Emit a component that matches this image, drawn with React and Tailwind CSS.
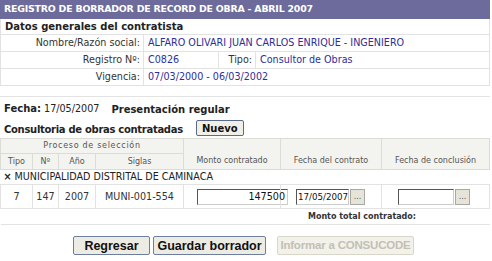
import React from "react"

const font = { fontFamily: "'DejaVu Sans', Verdana, sans-serif" }

function DotsButton() {
  return (
    <span className="inline-flex h-[16px] w-[15px] shrink-0 items-center justify-center border border-[#a8a8a0] bg-[#e6e4d8] text-[8px] leading-none text-[#555]">
      ...
    </span>
  )
}

export default function App() {
  return (
    <div className="h-[261px] w-[492px] overflow-hidden bg-white text-[9.6px] text-[#333]" style={font}>
      {/* Title */}
      <div className="mr-[2px] flex h-[19px] items-center bg-[#6c6b9b] pl-[4px] text-[9.4px] font-bold tracking-[-0.2px] text-white">
        REGISTRO DE BORRADOR DE RECORD DE OBRA - ABRIL 2007
      </div>

      {/* Datos generales */}
      <div className="mr-[2px] border-l border-r border-[#e2e2e2]">
        <div className="flex h-[16px] items-center border-b border-[#e2e2e2] pl-[4px] text-[10px] font-bold text-[#222]">
          Datos generales del contratista
        </div>
        <div className="flex h-[17px] items-center border-b border-[#e2e2e2]">
          <div className="w-[143px] border-r border-[#e2e2e2] pr-[3px] text-right leading-[16px]">Nombre/Razón social:</div>
          <div className="pl-[4px] text-[#2e2e9a]">ALFARO OLIVARI JUAN CARLOS ENRIQUE - INGENIERO</div>
        </div>
        <div className="flex h-[17px] items-center border-b border-[#e2e2e2]">
          <div className="w-[143px] border-r border-[#e2e2e2] pr-[3px] text-right leading-[16px]">Registro Nº:</div>
          <div className="w-[75px] border-r border-[#e2e2e2] pl-[4px] leading-[16px] text-[#2e2e9a]">C0826</div>
          <div className="w-[37px] border-r border-[#e2e2e2] pr-[3px] text-right leading-[16px]">Tipo:</div>
          <div className="pl-[4px] text-[#2e2e9a]">Consultor de Obras</div>
        </div>
        <div className="flex h-[17px] items-center border-b border-[#e2e2e2]">
          <div className="w-[143px] border-r border-[#e2e2e2] pr-[3px] text-right leading-[16px]">Vigencia:</div>
          <div className="pl-[4px] text-[#2e2e9a]">07/03/2000 - 06/03/2002</div>
        </div>
      </div>

      {/* Consultoria */}
      <div className="mr-[2px] mt-[10px] border-t border-[#e2e2e2]">
        <div className="flex h-[21px] items-center gap-[12px] pl-[4px] pt-[3px] text-[9.6px] text-[#222]">
          <span>
            <b className="text-[10px]">Fecha:</b> 17/05/2007
          </span>
          <b className="text-[10px]">Presentación regular</b>
        </div>
        <div className="flex h-[20px] items-center pl-[4px] text-[10px] font-bold text-[#222]">
          <span className="mt-[3px] tracking-[-0.3px]">Consultoria de obras contratadas</span>
          <span className="ml-[13px] inline-flex h-[16px] w-[48px] items-center justify-center rounded-[2px] border border-[#5a6b8a] bg-[#f0efe8] text-[10px] font-bold text-[#111]">
            Nuevo
          </span>
        </div>

        <table className="w-full table-fixed border-collapse text-[9.6px]">
          <colgroup>
            <col className="w-[32px]" />
            <col className="w-[26px]" />
            <col className="w-[37px]" />
            <col className="w-[88px]" />
            <col className="w-[97px]" />
            <col className="w-[101px]" />
            <col />
          </colgroup>
          <thead className="bg-[#f3f3ef] text-[8px] text-[#555]">
            <tr className="h-[15px]">
              <th colSpan={4} className="border border-[#dcdcd6] font-normal tracking-[0.7px]">Proceso de selección</th>
              <th rowSpan={2} className="border border-[#dcdcd6] pt-[14px] font-normal">Monto contratado</th>
              <th rowSpan={2} className="border border-[#dcdcd6] pt-[14px] font-normal">Fecha del contrato</th>
              <th rowSpan={2} className="border border-[#dcdcd6] pt-[14px] font-normal">Fecha de conclusión</th>
            </tr>
            <tr className="h-[16px]">
              <th className="border border-[#dcdcd6] font-normal">Tipo</th>
              <th className="border border-[#dcdcd6] font-normal">Nº</th>
              <th className="border border-[#dcdcd6] font-normal">Año</th>
              <th className="border border-[#dcdcd6] font-normal">Siglas</th>
            </tr>
          </thead>
          <tbody>
            <tr className="h-[15px]">
              <td colSpan={7} className="pl-[3px] text-[9.6px] text-[#222]">
                <span className="mr-[3px] font-bold">×</span>MUNICIPALIDAD DISTRITAL DE CAMINACA
              </td>
            </tr>
            <tr className="h-[24px] text-center">
              <td className="border border-[#e2e2e2]">7</td>
              <td className="border border-[#e2e2e2]">147</td>
              <td className="border border-[#e2e2e2]">2007</td>
              <td className="border border-[#e2e2e2]">MUNI-001-554</td>
              <td className="border border-[#e2e2e2]">
                <div className="ml-[13px] h-[16px] w-[91px] border border-t-[#555] border-l-[#555] border-r-[#ccc] border-b-[#ccc] bg-white pr-[2px] text-right leading-[14px] text-[#111]">
                  147500
                </div>
              </td>
              <td className="border border-[#e2e2e2]">
                <div className="flex items-center gap-[1px] pl-[15px]">
                  <div className="h-[16px] w-[53px] shrink-0 overflow-hidden whitespace-nowrap border border-t-[#555] border-l-[#555] border-r-[#ccc] border-b-[#ccc] bg-white pl-[1px] text-left text-[8.7px] leading-[14px] text-[#111]">
                    17/05/2007
                  </div>
                  <DotsButton />
                </div>
              </td>
              <td className="border border-[#e2e2e2]">
                <div className="flex items-center gap-[1px] pl-[16px]">
                  <div className="h-[16px] w-[56px] shrink-0 border border-t-[#555] border-l-[#555] border-r-[#ccc] border-b-[#ccc] bg-white" />
                  <DotsButton />
                </div>
              </td>
            </tr>
            <tr className="h-[16px] border-b border-[#e2e2e2]">
              <td colSpan={5} />
              <td colSpan={2} className="pr-[46px] text-center text-[8px] font-bold text-[#333]">
                Monto total contratado:
              </td>
            </tr>
          </tbody>
        </table>
      </div>

      {/* Buttons */}
      <div
        className="mt-[11px] flex gap-[3px] whitespace-nowrap pl-[73px] text-[12.5px] font-bold"
        style={{ fontFamily: "'Liberation Sans', Arial, sans-serif" }}
      >
        <span className="inline-flex h-[19px] w-[77px] items-center justify-center rounded-[2px] border border-[#6e7f9e] bg-[#ecebe4] text-[#111]">
          Regresar
        </span>
        <span className="inline-flex h-[19px] w-[113px] items-center justify-center rounded-[2px] border border-[#6e7f9e] bg-[#ecebe4] text-[#111]">
          Guardar borrador
        </span>
        <span className="ml-[8px] inline-flex h-[19px] w-[137px] items-center justify-center rounded-[2px] border border-[#d8d6c8] bg-[#f3f2ea] text-[11.5px] tracking-[-0.2px] text-[#c2c0b4]">
          Informar a CONSUCODE
        </span>
      </div>
    </div>
  )
}
